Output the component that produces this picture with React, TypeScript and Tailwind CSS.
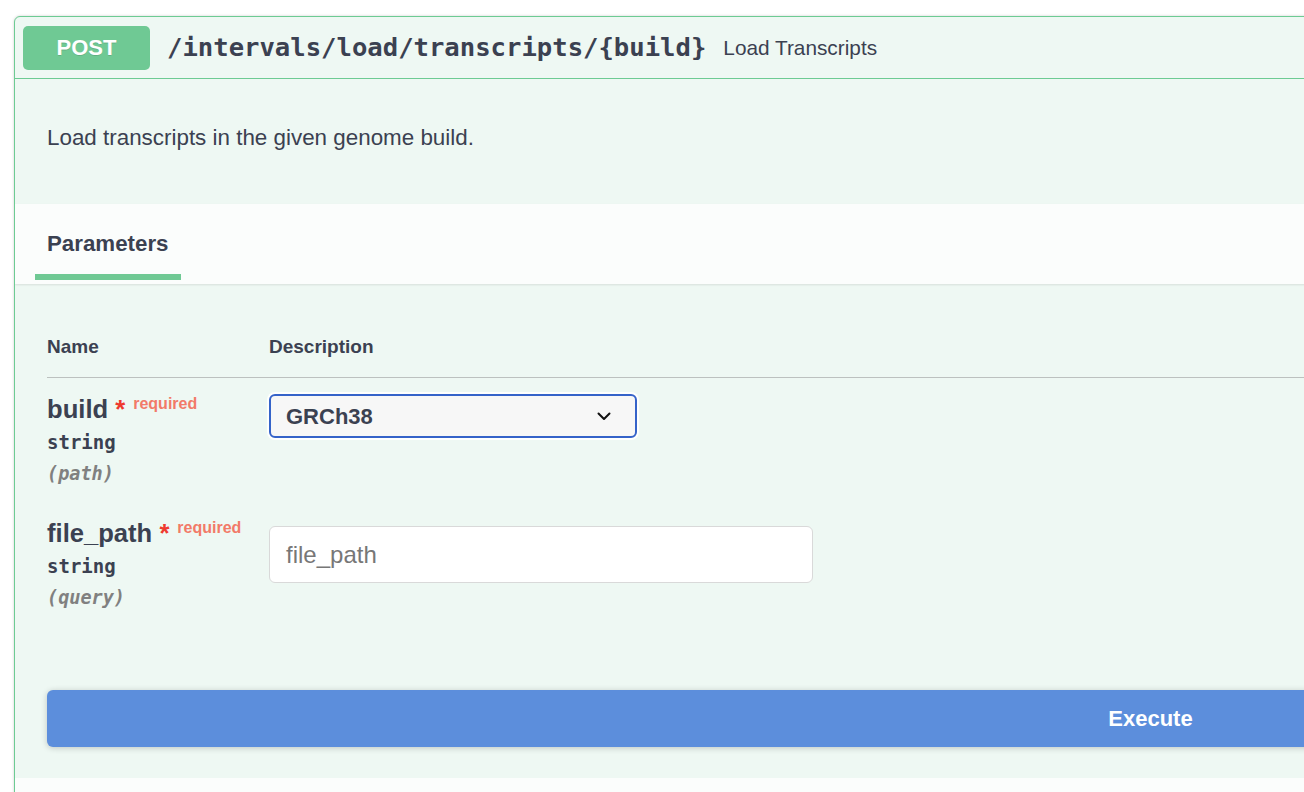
import React from "react";

const text = "text-[#3b4151]";

function ParamRow({
  name,
  kind,
  children,
}: {
  name: string;
  kind: string;
  children: React.ReactNode;
}) {
  return (
    <div className="flex py-[16px]">
      <div className="w-[222px] shrink-0">
        <div className={`h-[30px] leading-[30px] text-[25.6px] font-bold ${text} whitespace-nowrap`}>
          {name} <span className="text-[#ee3a2e]">*</span>
          <span className="relative -top-[9px] pl-[8px] text-[16px] font-bold text-[#f27a68]">
            required
          </span>
        </div>
        <div className={`mt-[6px] h-[24px] leading-[24px] font-['DejaVu_Sans_Mono'] text-[19px] font-bold ${text}`}>
          string
        </div>
        <div className="mt-[8px] h-[24px] leading-[24px] font-['DejaVu_Sans_Mono'] text-[18.5px] font-bold italic text-[#808080]">
          ({kind})
        </div>
      </div>
      <div>{children}</div>
    </div>
  );
}

export default function App() {
  return (
    <div className="w-[1304px] h-[792px] overflow-hidden bg-white font-['Liberation_Sans',sans-serif]">
      <div className="pt-[16px] pl-[14px]">
        <div className="w-[2273px] border border-[#6dcb93] rounded-[6px] bg-[#eef8f3] shadow-[0_0_3px_rgba(0,0,0,0.19)] overflow-hidden">
          {/* summary bar */}
          <div className="flex items-center h-[62px] px-[8px] border-b border-[#6dcb93]">
            <div className="w-[127px] h-[44px] rounded-[5px] bg-[#6fc994] flex items-center justify-center text-white text-[22px] font-bold [text-shadow:0_1px_0_rgba(0,0,0,0.12)]">
              POST
            </div>
            <div className={`ml-[17px] font-['DejaVu_Sans_Mono',monospace] text-[25.6px] font-bold ${text}`}>
              /intervals/load/transcripts/&#123;build&#125;
            </div>
            <div className={`ml-[17px] text-[20.8px] ${text}`}>Load Transcripts</div>
          </div>

          {/* description */}
          <div className={`h-[125px] pt-[43px] pl-[32px] text-[22.4px] leading-[31px] ${text}`}>
            Load transcripts in the given genome build.
          </div>

          {/* parameters tab header */}
          <div className="h-[80px] bg-[#fbfdfc] shadow-[0_1px_2px_rgba(0,0,0,0.1)] pl-[20px]">
            <div className="w-[146px] pt-[27px]">
              <div className={`pl-[12px] h-[26px] leading-[26px] text-[22.3px] font-bold ${text}`}>
                Parameters
              </div>
              <div className="mt-[17px] h-[6px] bg-[#6fc994]" />
            </div>
          </div>

          {/* table */}
          <div className="pl-[32px] pt-[51px] pb-[32px]">
            <div className={`flex pb-[18px] border-b border-[#bcc1bf] text-[19px] leading-[24px] font-bold ${text}`}>
              <div className="w-[222px]">Name</div>
              <div>Description</div>
            </div>

            <ParamRow name="build" kind="path">
              <div className="w-[368px] h-[44px] rounded-[6px] border-2 border-[#3563c9] bg-[#f7f7f7] shadow-[0_0_0_2px_rgba(255,255,255,0.9)] flex items-center justify-between pl-[15px] pr-[24px]">
                <span className={`text-[22px] font-bold ${text}`}>GRCh38</span>
                <svg width="14" height="9" viewBox="0 0 14 9" fill="none">
                  <path d="M1.5 1.5 L7 7 L12.5 1.5" stroke="#111" strokeWidth="2" strokeLinecap="round" strokeLinejoin="round" />
                </svg>
              </div>
            </ParamRow>

            <ParamRow name="file_path" kind="query">
              <div className="mt-[8px] w-[544px] h-[57px] rounded-[6px] border border-[#d9d9d9] bg-white flex items-center pl-[16px] text-[24px] text-[#777]">
                file_path
              </div>
            </ParamRow>
          </div>

          {/* execute */}
          <div className="px-[32px] pt-[32px] pb-[31px]">
            <div className="w-[2207px] h-[57px] rounded-[6px] bg-[#5c8edc] shadow-[0_1px_6px_rgba(0,0,0,0.2)] flex items-center justify-center text-white text-[22px] font-bold">
              Execute
            </div>
          </div>

          <div className="h-[80px] bg-[#fbfdfc]" />
        </div>
      </div>
    </div>
  );
}
